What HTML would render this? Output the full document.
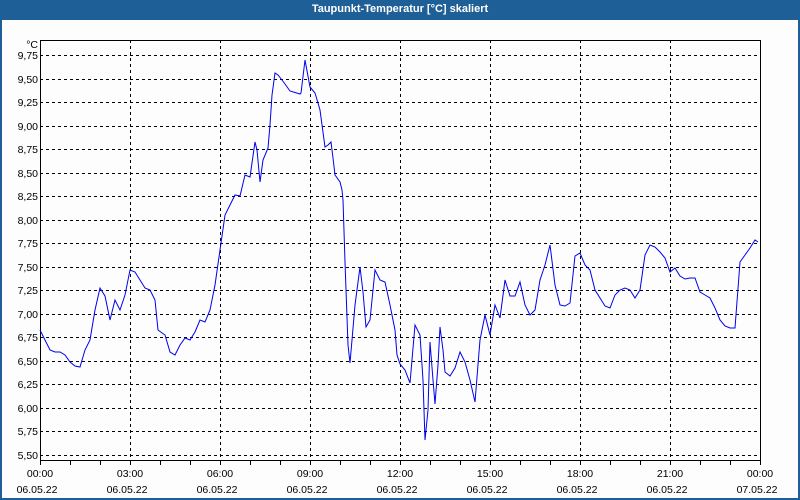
<!DOCTYPE html>
<html><head><meta charset="utf-8"><style>
html,body{margin:0;padding:0;width:800px;height:500px;overflow:hidden;background:#1e5f97;}
#w{position:absolute;left:2px;top:20px;width:796px;height:478px;background:#fdfdfd;}
#t{position:absolute;left:0;top:0;width:800px;height:20px;color:#fff;font:bold 11px "Liberation Sans",sans-serif;text-align:center;line-height:18px;}
svg{position:absolute;left:0;top:0}
text{font-family:"Liberation Sans",sans-serif;font-size:10.5px;fill:#000}
</style></head><body>
<div id="t">Taupunkt-Temperatur [°C] skaliert</div>
<div id="w"></div>
<svg width="800" height="500">
<g stroke="#000" stroke-dasharray="3,3" stroke-width="1" shape-rendering="crispEdges">
<line x1="40" x2="760" y1="55.5" y2="55.5"/><line x1="40" x2="760" y1="79.5" y2="79.5"/><line x1="40" x2="760" y1="102.5" y2="102.5"/><line x1="40" x2="760" y1="126.5" y2="126.5"/><line x1="40" x2="760" y1="149.5" y2="149.5"/><line x1="40" x2="760" y1="173.5" y2="173.5"/><line x1="40" x2="760" y1="196.5" y2="196.5"/><line x1="40" x2="760" y1="220.5" y2="220.5"/><line x1="40" x2="760" y1="243.5" y2="243.5"/><line x1="40" x2="760" y1="267.5" y2="267.5"/><line x1="40" x2="760" y1="290.5" y2="290.5"/><line x1="40" x2="760" y1="314.5" y2="314.5"/><line x1="40" x2="760" y1="337.5" y2="337.5"/><line x1="40" x2="760" y1="361.5" y2="361.5"/><line x1="40" x2="760" y1="384.5" y2="384.5"/><line x1="40" x2="760" y1="408.5" y2="408.5"/><line x1="40" x2="760" y1="431.5" y2="431.5"/><line x1="40" x2="760" y1="455.5" y2="455.5"/>
<line x1="130.5" x2="130.5" y1="40" y2="460"/><line x1="220.5" x2="220.5" y1="40" y2="460"/><line x1="310.5" x2="310.5" y1="40" y2="460"/><line x1="400.5" x2="400.5" y1="40" y2="460"/><line x1="490.5" x2="490.5" y1="40" y2="460"/><line x1="580.5" x2="580.5" y1="40" y2="460"/><line x1="670.5" x2="670.5" y1="40" y2="460"/>
</g>
<g stroke="#000" stroke-width="1" shape-rendering="crispEdges" fill="none">
<rect x="40.5" y="40.5" width="720" height="420"/>
<path d="M40.5 461v4M70.5 461v4M100.5 461v4M130.5 461v4M160.5 461v4M190.5 461v4M220.5 461v4M250.5 461v4M280.5 461v4M310.5 461v4M340.5 461v4M370.5 461v4M400.5 461v4M430.5 461v4M460.5 461v4M490.5 461v4M520.5 461v4M550.5 461v4M580.5 461v4M610.5 461v4M640.5 461v4M670.5 461v4M700.5 461v4M730.5 461v4M760.5 461v4"/>
</g>
<polyline fill="none" stroke="#0000ee" stroke-width="1" points="40,330 45,340 50,350 55,352 60,352 65,355 70,362 75,366 80,367 85,350 90,340 95,310 100,288 105,296 110,320 115,300 120,310 125,295 130,270 135,272 140,280 145,288 150,290 155,300 158,330 165,335 170,352 175,355 180,345 185,338 190,340 195,332 200,320 205,322 210,310 215,285 220,250 225,215 230,205 235,195 240,196 245,175 250,177 255,142 257,150 260,182 263,160 268,148 270,125 272,95 275,73 278,75 282,80 285,84 290,91 300,94 301,93 305,60 310,87 315,93 318,103 320,110 325,147 328,145 331,142 333,158 335,175 340,182 342,190 343,200 345,262 348,345 350,363 352,340 355,305 360,267 363,292 366,327 370,320 375,270 380,280 385,282 390,305 395,330 397,355 400,364 405,370 410,383 415,325 420,335 423,380 425,440 428,410 430,342 433,380 435,404 438,365 440,327 443,350 445,372 450,376 455,368 460,352 465,362 470,380 475,402 480,340 485,315 490,335 495,305 500,318 505,280 510,296 515,296 520,282 525,305 530,315 535,310 540,280 545,265 550,245 555,285 560,305 565,306 570,303 575,256 580,253 585,265 590,270 595,290 600,298 605,306 610,308 615,295 620,290 625,288 630,290 635,298 640,290 645,255 650,245 655,247 660,252 665,258 670,272 675,268 680,276 685,279 690,278 695,278 700,292 705,295 710,298 715,308 720,320 725,326 730,328 735,328 740,262 745,255 750,248 755,240 758,242"/>
<g text-anchor="end">
<text x="38" y="48" font-size="12">°C</text>
<text x="38" y="59">9,75</text><text x="38" y="83">9,50</text><text x="38" y="106">9,25</text><text x="38" y="130">9,00</text><text x="38" y="153">8,75</text><text x="38" y="177">8,50</text><text x="38" y="200">8,25</text><text x="38" y="224">8,00</text><text x="38" y="247">7,75</text><text x="38" y="271">7,50</text><text x="38" y="294">7,25</text><text x="38" y="318">7,00</text><text x="38" y="341">6,75</text><text x="38" y="365">6,50</text><text x="38" y="388">6,25</text><text x="38" y="412">6,00</text><text x="38" y="435">5,75</text><text x="38" y="459">5,50</text>
</g>
<g text-anchor="middle">
<text x="40" y="477">00:00</text><text x="37" y="493">06.05.22</text>
<text x="130" y="477">03:00</text><text x="127" y="493">06.05.22</text>
<text x="220" y="477">06:00</text><text x="217" y="493">06.05.22</text>
<text x="310" y="477">09:00</text><text x="307" y="493">06.05.22</text>
<text x="400" y="477">12:00</text><text x="397" y="493">06.05.22</text>
<text x="490" y="477">15:00</text><text x="487" y="493">06.05.22</text>
<text x="580" y="477">18:00</text><text x="577" y="493">06.05.22</text>
<text x="670" y="477">21:00</text><text x="667" y="493">06.05.22</text>
<text x="760" y="477">00:00</text><text x="757" y="493">07.05.22</text>
</g>
</svg>
</body></html>
